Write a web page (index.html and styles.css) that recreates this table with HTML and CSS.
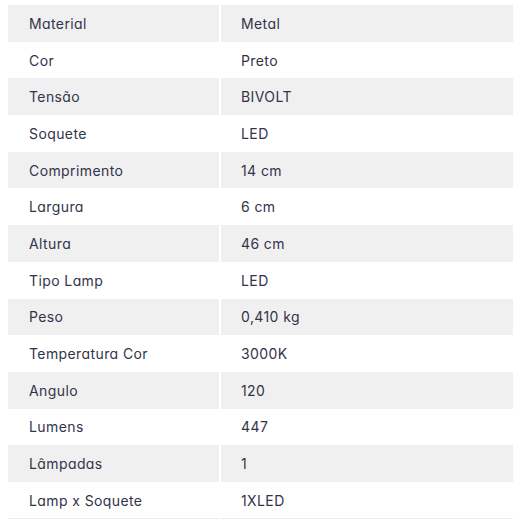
FILE: index.html
```html
<!DOCTYPE html>
<html lang="pt">
<head>
<meta charset="utf-8">
<link rel="stylesheet" href="styles.css">
</head>
<body>
<table class="specs">
<tbody>
<tr><td class="k">Material</td><td class="v">Metal</td></tr>
<tr><td class="k">Cor</td><td class="v">Preto</td></tr>
<tr><td class="k">Tensão</td><td class="v">BIVOLT</td></tr>
<tr><td class="k">Soquete</td><td class="v">LED</td></tr>
<tr><td class="k">Comprimento</td><td class="v">14 cm</td></tr>
<tr><td class="k">Largura</td><td class="v">6 cm</td></tr>
<tr><td class="k">Altura</td><td class="v">46 cm</td></tr>
<tr><td class="k">Tipo Lamp</td><td class="v">LED</td></tr>
<tr><td class="k">Peso</td><td class="v">0,410 kg</td></tr>
<tr><td class="k">Temperatura Cor</td><td class="v">3000K</td></tr>
<tr><td class="k">Angulo</td><td class="v">120</td></tr>
<tr><td class="k">Lumens</td><td class="v">447</td></tr>
<tr><td class="k">Lâmpadas</td><td class="v">1</td></tr>
<tr><td class="k">Lamp x Soquete</td><td class="v">1XLED</td></tr>
</tbody>
</table>
</body>
</html>
```
FILE: styles.css
```css
html, body {
  margin: 0;
  background: #ffffff;
}
body {
  padding: 5px 7px 0 8px;
  font-family: Inter, "Noto Sans", sans-serif;
  font-feature-settings: "cv11";
  font-size: 14px;
  letter-spacing: 0.4px;
  color: #33334a;
}
.specs {
  width: 505px;
  border-collapse: collapse;
  table-layout: fixed;
  border-bottom: 1px solid #ececec;
}
.specs td {
  height: 36.7px;
  padding: 0 0 0 21px;
  vertical-align: middle;
  box-sizing: border-box;
}
.specs .k {
  width: 212px;
  border-right: 2px solid #ffffff;
}
.specs .v {
  padding-left: 20px;
}
.specs tr:nth-child(odd) td {
  background: #f0f0f0;
}
```
